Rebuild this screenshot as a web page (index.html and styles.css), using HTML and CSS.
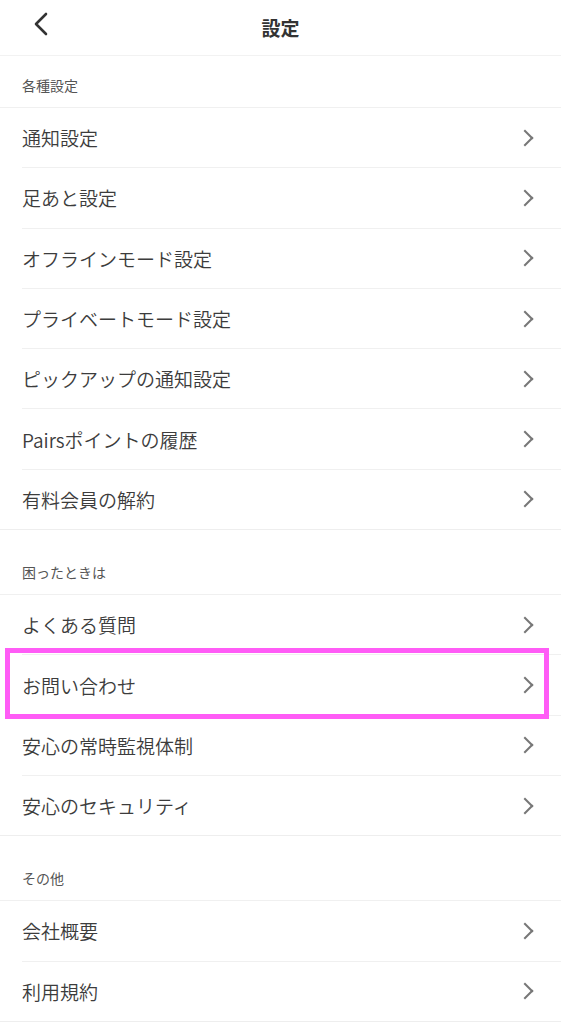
FILE: index.html
```html
<!DOCTYPE html>
<html lang="ja">
<head>
    <meta charset="UTF-8">
    <meta name="viewport" content="width=device-width, initial-scale=1.0">
    <title>設定</title>
    <link rel="stylesheet" href="styles.css">
</head>
<body>
    <header class="topbar">
        <button class="back">
            <svg width="16" height="24" viewBox="0 0 16 24"><path d="M13 2 L3 12 L13 22" fill="none" stroke="#333" stroke-width="2.6" stroke-linecap="round" stroke-linejoin="round"/></svg>
        </button>
        <h1>設定</h1>
    </header>

    <section class="group first">
        <div class="group-title">各種設定</div>
        <ul class="rows">
            <li class="row">通知設定</li>
            <li class="row">足あと設定</li>
            <li class="row">オフラインモード設定</li>
            <li class="row">プライベートモード設定</li>
            <li class="row">ピックアップの通知設定</li>
            <li class="row">Pairsポイントの履歴</li>
            <li class="row">有料会員の解約</li>
        </ul>
    </section>

    <section class="group">
        <div class="group-title">困ったときは</div>
        <ul class="rows">
            <li class="row">よくある質問</li>
            <li class="row marked">お問い合わせ</li>
            <li class="row">安心の常時監視体制</li>
            <li class="row">安心のセキュリティ</li>
        </ul>
    </section>

    <section class="group">
        <div class="group-title">その他</div>
        <ul class="rows">
            <li class="row">会社概要</li>
            <li class="row">利用規約</li>
        </ul>
    </section>
</body>
</html>
```

FILE: styles.css
```css
body {
    margin: 0;
    background: #fff;
    font-family: "Noto Sans CJK JP", "Noto Sans", sans-serif;
    color: #3a3a3a;
}

.topbar {
    position: relative;
    height: 55px;
    display: flex;
    align-items: center;
    justify-content: center;
    border-bottom: 1px solid #f2f2f2;
}

.topbar h1 {
    margin: 0;
    font-size: 19px;
    font-weight: bold;
    color: #333;
}

/* back arrow sits over the bar */
.back {
    position: absolute;
    left: 33px;
    top: 12px;
    padding: 0;
    border: none;
    background: transparent;
    display: flex;
}

.group {
    margin-top: 13px;
    border-bottom: 1px solid #eeeeee;
}

.group.first {
    margin-top: 0;
}

.group-title {
    height: 52px;
    display: flex;
    align-items: flex-end;
    padding: 0 22px 15px;
    box-sizing: border-box;
    font-size: 14px;
    color: #555;
    border-bottom: 1px solid #f0f0f0;
    line-height: 1;
}

.rows {
    list-style: none;
    margin: 0;
    padding: 0;
}

.row {
    position: relative;
    height: 59.3px;
    margin-left: 22px;
    padding-right: 28px;
    display: flex;
    align-items: center;
    justify-content: space-between;
    font-size: 19px;
    font-weight: 350;
    color: #3c3c3c;
    border-bottom: 1px solid #f0f0f0;
}

.row:last-child {
    border-bottom: none;
}

.row::after {
    content: "";
    width: 10px;
    height: 10px;
    border-top: 2px solid #777;
    border-right: 2px solid #777;
    transform: rotate(45deg);
    margin-right: 2px;
}

/* pink annotation frame */
.row.marked::before {
    content: "";
    position: absolute;
    left: -17px;
    right: 12px;
    top: -7px;
    bottom: -4px;
    border: 5px solid #ff5cf6;
}
```
